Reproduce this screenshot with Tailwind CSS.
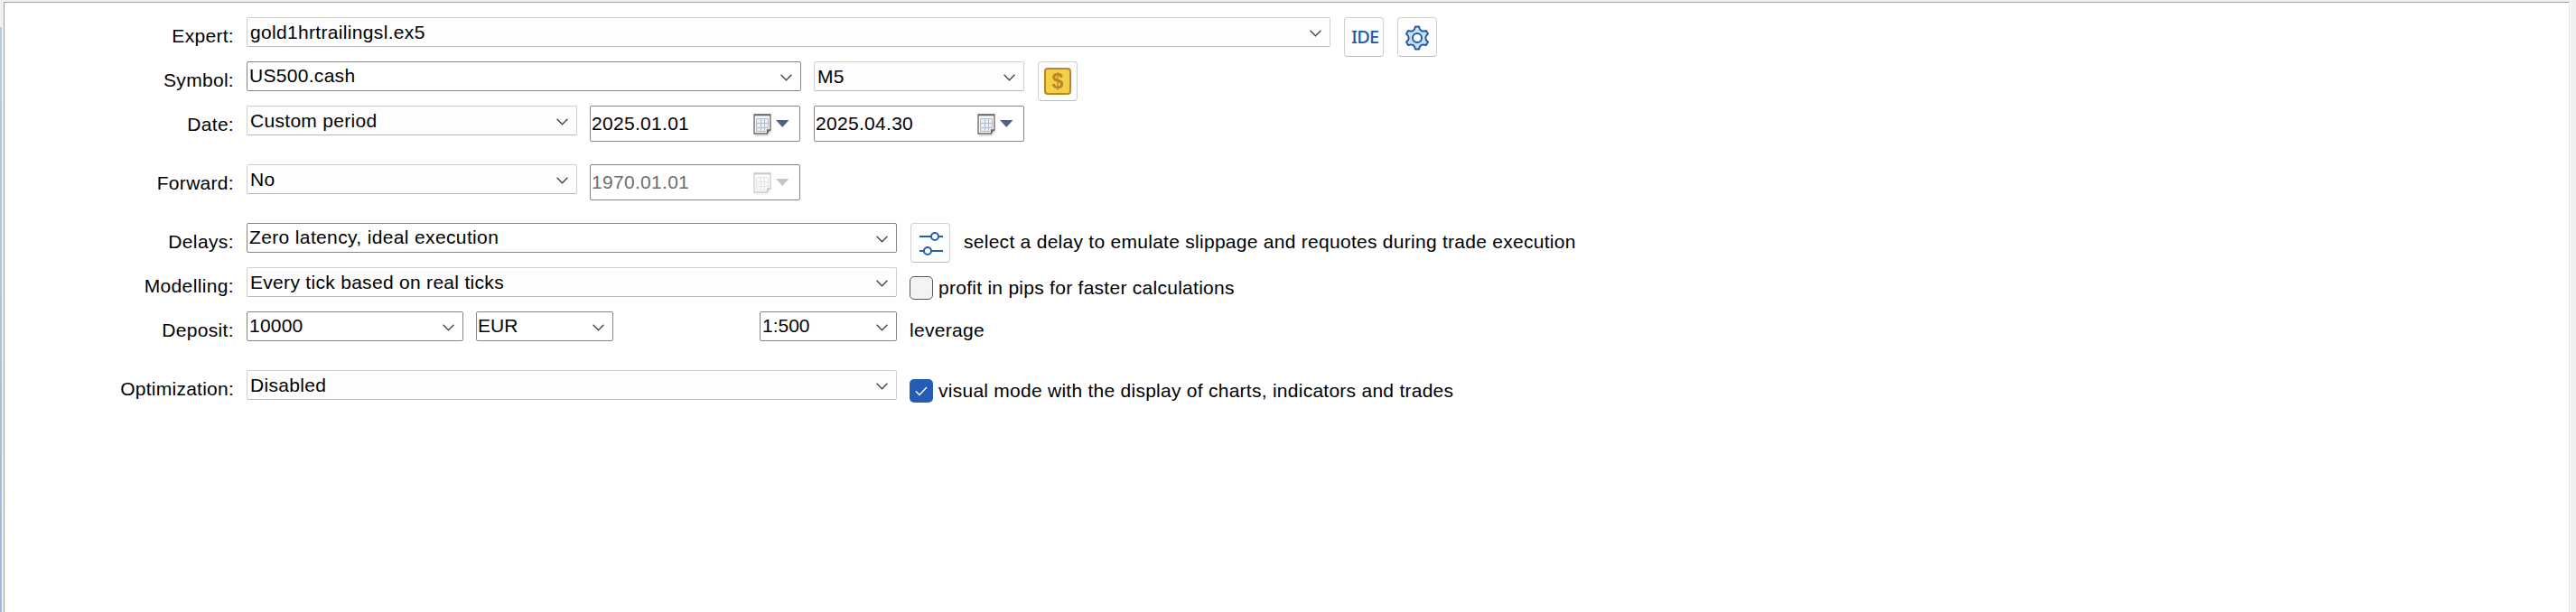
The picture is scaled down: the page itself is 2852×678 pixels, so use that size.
<!DOCTYPE html>
<html lang="en">
<head>
<meta charset="utf-8">
<title>Strategy Tester</title>
<script src="https://cdn.jsdelivr.net/npm/@tailwindcss/browser@4"></script>
</head>
<body class="w-[2852px] h-[678px] overflow-hidden bg-[#f0f0f0] flex font-['Liberation_Sans',Arial,sans-serif] text-[21px] leading-6 tracking-[0.3px] text-black whitespace-nowrap">

<svg class="hidden">
  <symbol id="chev" viewBox="0 0 13 8"><path d="M.6.7l5.9 6 5.9-6" fill="none" stroke="#444" stroke-width="1.3"/></symbol>
  <symbol id="cal" viewBox="0 0 40 25">
    <path d="M2 24h13l5-5" fill="none" stroke="#000" stroke-opacity=".12" stroke-width="2"/>
    <path d="M1 1h18v17h-3.500v4H1z" fill="#f6f7fb" stroke="#6b6464" stroke-width="1.3"/>
    <path d="M1 1.500h18" stroke="#6b6464" stroke-width="1.500"/>
    <path d="M3.500 5.500h13v11h-3v3h-10z" fill="#e9edf5"/>
    <path d="M3.500 5.500h13M3.500 10.500h13M3.500 15.500h13M3.500 19.500h10M3.500 5.500V19.500M8.500 5.500V19.500M12.500 5.500V19.500M16.500 5.500V16" stroke="#b4bbcb" stroke-width="1" fill="none"/>
    <path d="M15.500 22v-4H19z" fill="#6b6464"/>
    <path d="M25 7h14.500l-7.250 8z" fill="#4f5f87"/>
  </symbol>
</svg>

<div class="w-[2px] mt-[30px] bg-linear-to-b from-[#b8cbe4] to-[#a4b7d9]"></div>

<main class="ml-[2px] mt-[2px] w-[2841px] h-[676px] bg-white border-t border-l border-r border-t-[#a0a0a0] border-l-[#a0a0a0] border-r-[#e6e6e6] flex flex-col pt-4">

  <!-- Expert -->
  <div class="flex items-start h-[49px]">
    <div class="w-[254px] pt-[9px] text-right">Expert:</div>
    <div class="ml-[14px] w-[1200px] h-[33px] border border-[#d0d0d0] border-b-[#b8b8b8] rounded-[2px] bg-[#fdfdfd] flex justify-between pl-[3px] pr-[9px] pt-[4px]">
      <span class="tracking-[0.33px]">gold1hrtrailingsl.ex5</span><svg class="w-[13px] h-2 mt-[9px]"><use href="#chev"/></svg>
    </div>
    <div class="ml-[15px] w-11 h-11 border border-[#d0d0d0] border-b-[#bcbcbc] rounded-[4px] bg-[#fdfdfd] pl-[7px] pt-[9px] text-[#235b9f] font-['Noto_Sans',sans-serif] text-[20px] font-medium tracking-[-0.8px]">IDE</div>
    <div class="ml-[15px] w-11 h-11 border border-[#d0d0d0] border-b-[#bcbcbc] rounded-[4px] bg-[#fdfdfd] flex items-center justify-center">
      <svg class="w-[30px] h-[30px] mt-[2px]" viewBox="-15 -15 30 30" fill="#c5e1fb" stroke="#235b9f" stroke-width="2" stroke-linejoin="round">
        <path d="M-2-12.600L2-12.600Q3.250-5.630 9.950-8.060L11.950-4.590Q6.500 0 11.950 4.590L9.950 8.060Q3.250 5.630 2 12.600L-2 12.600Q-3.250 5.630-9.950 8.060L-11.950 4.590Q-6.500 0-11.950-4.590L-9.950-8.060Q-3.250-5.630-2-12.600Z"/>
        <circle r="5" fill="#fff"/>
      </svg>
    </div>
  </div>

  <!-- Symbol -->
  <div class="flex items-start h-[49px]">
    <div class="w-[254px] pt-[9px] text-right">Symbol:</div>
    <div class="ml-[14px] w-[614px] h-[33px] border border-[#858585] rounded-[2px] bg-white flex justify-between pl-[2px] pr-[9px] pt-[3px]">
      <span>US500.cash</span><svg class="w-[13px] h-2 mt-[10px]"><use href="#chev"/></svg>
    </div>
    <div class="ml-[14px] w-[233px] h-[33px] border border-[#d0d0d0] border-b-[#b8b8b8] rounded-[2px] bg-[#fdfdfd] flex justify-between pl-[3px] pr-[9px] pt-[4px]">
      <span>M5</span><svg class="w-[13px] h-2 mt-[9px]"><use href="#chev"/></svg>
    </div>
    <div class="ml-[15px] w-11 h-11 border border-[#d0d0d0] border-b-[#bcbcbc] rounded-[4px] bg-[#fdfdfd] flex items-center justify-center">
      <div class="w-[30px] h-[30px] border-2 border-[#b9852d] rounded-[4px] bg-[#f4d045] text-[#b9852d] font-bold text-[23px] leading-[26px] text-center tracking-normal">$</div>
    </div>
  </div>

  <!-- Date -->
  <div class="flex items-start h-[65px]">
    <div class="w-[254px] pt-[9px] text-right">Date:</div>
    <div class="ml-[14px] w-[366px] h-[33px] border border-[#d0d0d0] border-b-[#b8b8b8] rounded-[2px] bg-[#fdfdfd] flex justify-between pl-[3px] pr-[9px] pt-[4px]">
      <span>Custom period</span><svg class="w-[13px] h-2 mt-[9px]"><use href="#chev"/></svg>
    </div>
    <div class="ml-[14px] w-[233px] h-10 border border-[#858585] rounded-[2px] bg-white flex justify-between pl-[1px] pr-[11px] pt-[7px]">
      <span>2025.01.01</span><svg class="w-10 h-[25px] mt-[1px]"><use href="#cal"/></svg>
    </div>
    <div class="ml-[15px] w-[233px] h-10 border border-[#858585] rounded-[2px] bg-white flex justify-between pl-[1px] pr-[11px] pt-[7px]">
      <span>2025.04.30</span><svg class="w-10 h-[25px] mt-[1px]"><use href="#cal"/></svg>
    </div>
  </div>

  <!-- Forward -->
  <div class="flex items-start h-[65px]">
    <div class="w-[254px] pt-[9px] text-right">Forward:</div>
    <div class="ml-[14px] w-[366px] h-[33px] border border-[#d0d0d0] border-b-[#b8b8b8] rounded-[2px] bg-[#fdfdfd] flex justify-between pl-[3px] pr-[9px] pt-[4px]">
      <span>No</span><svg class="w-[13px] h-2 mt-[9px]"><use href="#chev"/></svg>
    </div>
    <div class="ml-[14px] w-[233px] h-10 border border-[#858585] rounded-[2px] bg-white flex justify-between pl-[1px] pr-[11px] pt-[7px] text-[#6d6d6d]">
      <span>1970.01.01</span><svg class="w-10 h-[25px] mt-[1px] grayscale-75 opacity-35"><use href="#cal"/></svg>
    </div>
  </div>

  <!-- Delays -->
  <div class="flex items-start h-[49px]">
    <div class="w-[254px] pt-[9px] text-right tracking-[0.4px]">Delays:</div>
    <div class="ml-[14px] w-[720px] h-[33px] border border-[#858585] rounded-[2px] bg-white flex justify-between pl-[2px] pr-[9px] pt-[3px]">
      <span class="tracking-[0.36px]">Zero latency, ideal execution</span><svg class="w-[13px] h-2 mt-[10px]"><use href="#chev"/></svg>
    </div>
    <div class="ml-[15px] w-11 h-11 border border-[#d0d0d0] border-b-[#bcbcbc] rounded-[4px] bg-[#fdfdfd] flex items-center justify-center">
      <svg class="w-[26px] h-[26px] mt-[1px] ml-[2px]" viewBox="0 0 26 26" stroke="#235fa8" stroke-width="2" fill="#fdfdfd">
        <path d="M0 5h26M0 21h26"/><circle cx="17" cy="5" r="4"/><circle cx="9" cy="21" r="4"/>
      </svg>
    </div>
    <div class="ml-[15px] pt-[9px] tracking-[0.275px]">select a delay to emulate slippage and requotes during trade execution</div>
  </div>

  <!-- Modelling -->
  <div class="flex items-start h-[49px]">
    <div class="w-[254px] pt-[9px] text-right tracking-[0.36px]">Modelling:</div>
    <div class="ml-[14px] w-[720px] h-[33px] border border-[#d0d0d0] border-b-[#b8b8b8] rounded-[2px] bg-[#fdfdfd] flex justify-between pl-[3px] pr-[9px] pt-[4px]">
      <span class="tracking-[0.3px]">Every tick based on real ticks</span><svg class="w-[13px] h-2 mt-[9px]"><use href="#chev"/></svg>
    </div>
    <div class="ml-[14px] mt-[10px] w-[26px] h-[26px] border border-[#555] rounded-[5px] bg-[#f3f3f3]"></div>
    <div class="ml-[6px] pt-[11px] tracking-[0.27px]">profit in pips for faster calculations</div>
  </div>

  <!-- Deposit -->
  <div class="flex items-start h-[65px]">
    <div class="w-[254px] pt-[9px] text-right tracking-[0.35px]">Deposit:</div>
    <div class="ml-[14px] w-[240px] h-[33px] border border-[#858585] rounded-[2px] bg-white flex justify-between pl-[2px] pr-[9px] pt-[3px]">
      <span class="tracking-[0.2px]">10000</span><svg class="w-[13px] h-2 mt-[10px]"><use href="#chev"/></svg>
    </div>
    <div class="ml-[14px] w-[152px] h-[33px] border border-[#858585] rounded-[2px] bg-white flex justify-between pl-[1px] pr-[9px] pt-[3px]">
      <span class="tracking-normal">EUR</span><svg class="w-[13px] h-2 mt-[10px]"><use href="#chev"/></svg>
    </div>
    <div class="ml-[162px] w-[152px] h-[33px] border border-[#858585] rounded-[2px] bg-white flex justify-between pl-[2px] pr-[9px] pt-[3px]">
      <span class="tracking-normal">1:500</span><svg class="w-[13px] h-2 mt-[10px]"><use href="#chev"/></svg>
    </div>
    <div class="ml-[14px] pt-[9px]">leverage</div>
  </div>

  <!-- Optimization -->
  <div class="flex items-start h-[49px]">
    <div class="w-[254px] pt-[9px] text-right tracking-[0.25px]">Optimization:</div>
    <div class="ml-[14px] w-[720px] h-[33px] border border-[#d0d0d0] border-b-[#b8b8b8] rounded-[2px] bg-[#fdfdfd] flex justify-between pl-[3px] pr-[9px] pt-[4px]">
      <span>Disabled</span><svg class="w-[13px] h-2 mt-[9px]"><use href="#chev"/></svg>
    </div>
    <div class="ml-[14px] mt-[10px] w-[26px] h-[26px] rounded-[5px] bg-[#255db5] flex items-center justify-center">
      <svg class="w-[14px] h-[11px] mt-[1px]" viewBox="0 0 14 11"><path d="M1 5.500l4 4L13 1" fill="none" stroke="#fff" stroke-width="1.400"/></svg>
    </div>
    <div class="ml-[6px] pt-[11px] tracking-[0.26px]">visual mode with the display of charts, indicators and trades</div>
  </div>
</main>
<div class="w-[1px] mt-[2px] bg-white"></div>
</body>
</html>
